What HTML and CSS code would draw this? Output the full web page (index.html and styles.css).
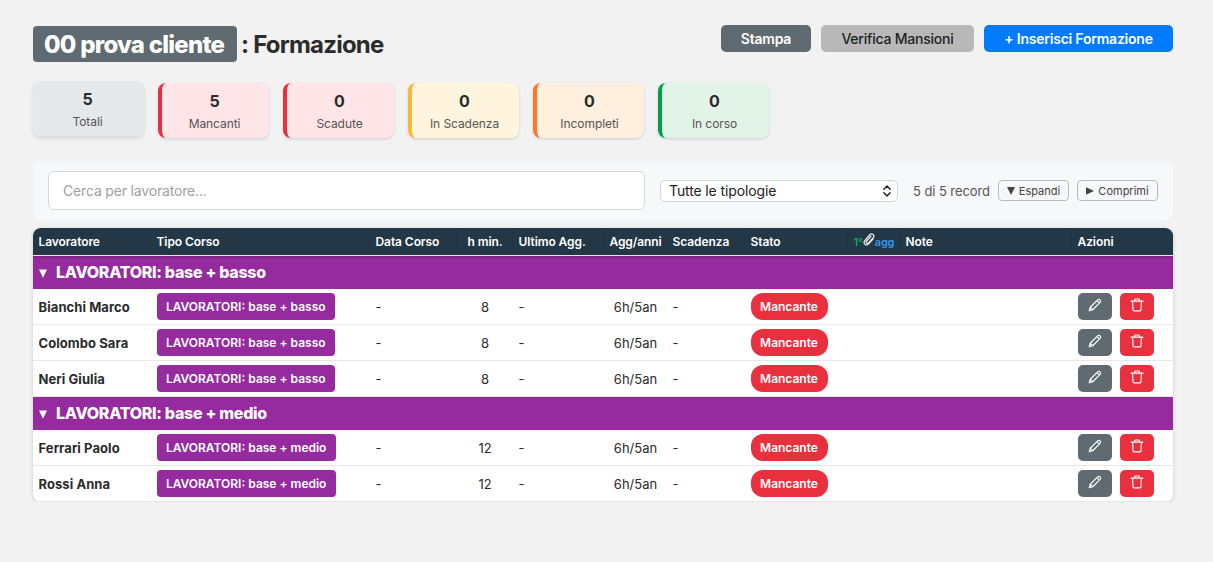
FILE: index.html
```html
<!DOCTYPE html>
<html lang="it">
<head>
    <meta charset="UTF-8">
    <meta name="viewport" content="width=device-width, initial-scale=1.0">
    <title>Formazione</title>
    <link rel="stylesheet" href="styles.css">
</head>
<body>
    <svg class="sprite" width="0" height="0">
        <symbol id="i-edit" viewBox="0 0 16 16">
            <path d="M1.4 14.6 2.6 10.6 11 2.2Q12.4.9 13.8 2.2 15.1 3.6 13.8 5L5.4 13.4ZM10.2 3.1 12.9 5.8M2.7 10.7 5.3 13.3" fill="none" stroke="currentColor" stroke-width="1.3" stroke-linejoin="round"/>
        </symbol>
        <symbol id="i-trash" viewBox="0 0 16 16">
            <path d="M1.3 3.6H14.7M5.3 3.3V2.2Q5.3 1.2 6.3 1.2H9.7Q10.7 1.2 10.7 2.2V3.3M3 3.7 3.4 13.4Q3.5 14.7 4.7 14.7H11.3Q12.5 14.7 12.6 13.4L13 3.7" fill="none" stroke="currentColor" stroke-width="1.3" stroke-linecap="round"/>
        </symbol>
    </svg>

    <div class="page-header">
        <h1><span class="cliente">00 prova cliente</span> <span class="titolo">: Formazione</span></h1>
        <div class="header-actions">
            <button class="btn btn-grey">Stampa</button>
            <button class="btn btn-light">Verifica Mansioni</button>
            <button class="btn btn-blue">+ Inserisci Formazione</button>
        </div>
    </div>

    <div class="stats">
        <div class="stat totali active"><b>5</b><span>Totali</span></div>
        <div class="stat mancanti"><b>5</b><span>Mancanti</span></div>
        <div class="stat scadute"><b>0</b><span>Scadute</span></div>
        <div class="stat in-scadenza"><b>0</b><span>In Scadenza</span></div>
        <div class="stat incompleti"><b>0</b><span>Incompleti</span></div>
        <div class="stat in-corso"><b>0</b><span>In corso</span></div>
    </div>

    <div class="filters">
        <input type="text" class="search" placeholder="Cerca per lavoratore...">
        <div class="select">
            <span>Tutte le tipologie</span>
            <svg width="8" height="12" viewBox="0 0 8 12"><path d="M.9 4.3 4 1.1 7.1 4.3M.9 7.7 4 10.9 7.1 7.7" fill="none" stroke="currentColor" stroke-width="1.5" stroke-linecap="round" stroke-linejoin="round"/></svg>
        </div>
        <span class="count">5 di 5 record</span>
        <button class="btn-small espandi"><svg width="8" height="8" viewBox="0 0 8 8"><path d="M0 0H8L4 8Z" fill="currentColor"/></svg>Espandi</button>
        <button class="btn-small comprimi"><svg width="8" height="8" viewBox="0 0 8 8"><path d="M0 .2V7.8L8 4Z" fill="currentColor"/></svg>Comprimi</button>
    </div>

    <div class="table-wrap">
        <table>
            <colgroup>
                <col class="c-lav"><col class="c-tipo"><col class="c-data"><col class="c-ore"><col class="c-ult"><col class="c-agg">
                <col class="c-scad"><col class="c-stato"><col class="c-att"><col class="c-note"><col class="c-az">
            </colgroup>
            <thead>
                <tr>
                    <th>Lavoratore</th>
                    <th>Tipo Corso</th>
                    <th>Data Corso</th>
                    <th class="center">h min.</th>
                    <th>Ultimo Agg.</th>
                    <th class="center">Agg/anni</th>
                    <th>Scadenza</th>
                    <th>Stato</th>
                    <th class="allegati"><div><span class="primo">1°</span><svg width="12" height="13" viewBox="0 0 12 13"><path d="M10.2 5.8 5.7 10.9Q3.9 12.7 2 11.2 .2 9.6 1.8 7.6L6.8 1.8Q8.4.2 10.1 1.5 11.6 2.9 10.3 4.6L5.7 9.8Q4.6 10.8 3.6 10 2.7 9.1 3.7 8L7.9 3.2" fill="none" stroke="#e4e7ea" stroke-width="1.3" stroke-linecap="round"/></svg><span class="agg">agg</span></div></th>
                    <th>Note</th>
                    <th>Azioni</th>
                </tr>
            </thead>
            <tbody id="corsi"></tbody>
        </table>
    </div>

    <script>
        const gruppi = [
            { tipo: 'LAVORATORI: base + basso', ore: 8, nomi: ['Bianchi Marco', 'Colombo Sara', 'Neri Giulia'] },
            { tipo: 'LAVORATORI: base + medio', ore: 12, nomi: ['Ferrari Paolo', 'Rossi Anna'] }
        ];

        const corsi = document.getElementById('corsi');
        gruppi.forEach(g => {
            let html = `<tr class="gruppo"><td colspan="11"><div><svg width="8" height="9" viewBox="0 0 8 9"><path d="M0 .5H8L4 8.8Z" fill="currentColor"/></svg>${g.tipo}</div></td></tr>`;
            g.nomi.forEach(nome => {
                html += `<tr class="riga">
                    <td class="nome">${nome}</td>
                    <td><span class="tipo">${g.tipo}</span></td>
                    <td>-</td>
                    <td class="center">${g.ore}</td>
                    <td>-</td>
                    <td class="center">6h/5an</td>
                    <td>-</td>
                    <td><span class="stato">Mancante</span></td>
                    <td></td>
                    <td></td>
                    <td><div class="azioni">
                        <button class="icon-btn btn-grey"><svg width="14" height="14"><use href="#i-edit"/></svg></button>
                        <button class="icon-btn btn-red"><svg width="14" height="14"><use href="#i-trash"/></svg></button>
                    </div></td>
                </tr>`;
            });
            corsi.innerHTML += html;
        });
    </script>
</body>
</html>
```
FILE: styles.css
```css
* {
    box-sizing: border-box;
}
body {
    margin: 0;
    padding: 25px 40px 0 33px;
    background-color: #f2f2f2;
    color: #2b2b2b;
    font-family: Inter, "Liberation Sans", sans-serif;
    font-size: 13px;
}
button, input {
    font-family: inherit;
}
.sprite {
    position: absolute;
}

/* intestazione */
.page-header {
    display: flex;
    justify-content: space-between;
    height: 57px;
}
h1 {
    display: flex;
    align-items: center;
    gap: 4px;
    height: 38px;
    margin: 0;
    font-size: 24px;
    font-weight: 700;
    letter-spacing: -0.77px;
    white-space: nowrap;
}
.cliente {
    height: 36px;
    width: 204px;
    padding: 1px 0 0 11px;
    line-height: 36px;
    border-radius: 4px;
    background-color: #5f6b70;
    color: white;
    font-weight: 800;
    letter-spacing: -0.76px;
}
.header-actions {
    display: flex;
    gap: 10px;
}
.btn {
    height: 27px;
    padding: 0;
    border: none;
    border-radius: 5px;
    font-size: 14px;
    font-weight: 600;
    letter-spacing: -0.22px;
    color: white;
    cursor: pointer;
}
.btn-grey {
    width: 90px;
    background-color: #5f6b70;
}
.btn-light {
    width: 153px;
    background-color: #b8b8b8;
    color: #222;
    font-weight: 500;
}
.btn-blue {
    width: 189px;
    background-color: #007aff;
}

/* riquadri */
.stats {
    display: flex;
    gap: 14px;
    margin-bottom: 23px;
    padding-top: 1px;
}
.stat {
    display: flex;
    flex-direction: column;
    align-items: center;
    width: 111px;
    height: 55px;
    padding: 8px 2px 0 0;
    border-left: 4px solid;
    border-radius: 8px;
    box-shadow: 0 1px 3px rgba(0, 0, 0, 0.15);
}
.stat b {
    font-size: 16px;
    line-height: 20px;
}
.stat span {
    margin-top: 5px;
    font-size: 12px;
    line-height: 16px;
    letter-spacing: -0.07px;
    color: #555;
}
.stat.active {
    transform: translateY(-2px);
    border-left: none;
    box-shadow: 0 2px 4px rgba(0, 0, 0, 0.12);
}
.totali { background-color: #e5e9ec; }
.mancanti, .scadute { background-color: #ffe4e8; border-color: #e8303f; }
.in-scadenza { background-color: #fff5de; border-color: #ffb638; }
.incompleti { background-color: #ffefde; border-color: #ff752b; }
.in-corso { background-color: #e2f3e8; border-color: #00a04a; }

/* filtri */
.filters {
    display: flex;
    align-items: center;
    height: 59px;
    margin-bottom: 8px;
    padding: 0 15px;
    border-radius: 8px;
    background-color: #f7f8fa;
}
.search {
    width: 597px;
    height: 39px;
    margin-right: 15px;
    padding: 0 14px;
    border: 1px solid #d8d8d8;
    border-radius: 6px;
    background-color: white;
    font-size: 14px;
    letter-spacing: -0.17px;
}
.search::placeholder {
    color: #a0a0a0;
}
.select {
    display: flex;
    align-items: center;
    justify-content: space-between;
    width: 238px;
    height: 22px;
    margin-right: 15px;
    padding: 0 6px 0 8px;
    border: 1px solid #d4d4d4;
    border-radius: 5px;
    background-color: white;
    font-size: 14px;
    letter-spacing: -0.12px;
    color: #222;
}
.count {
    width: 77px;
    margin-right: 8px;
    white-space: nowrap;
    letter-spacing: -0.08px;
    color: #555;
}
.btn-small {
    display: flex;
    align-items: center;
    justify-content: center;
    gap: 4px;
    width: 71px;
    height: 21px;
    padding: 0;
    border: 1px solid #bbb;
    border-radius: 4px;
    background-color: #f7f8fa;
    font-size: 11px;
    color: #444;
}
.comprimi {
    width: 81px;
    margin-left: 8px;
}

/* tabella */
.table-wrap {
    overflow: hidden;
    border-radius: 8px;
    background-color: white;
    box-shadow: 0 1px 4px rgba(0, 0, 0, 0.16);
}
table {
    width: 100%;
    table-layout: fixed;
    border-collapse: separate;
    border-spacing: 0;
}
.c-lav { width: 118px; }
.c-tipo { width: 219px; }
.c-data { width: 87px; }
.c-ore { width: 56px; }
.c-ult { width: 91px; }
.c-agg { width: 63px; }
.c-scad { width: 78px; }
.c-stato { width: 103px; }
.c-att { width: 52px; }
.c-note { width: 172px; }
.c-az { width: 101px; }
th, td {
    padding: 0 0 0 5.5px;
    text-align: left;
    white-space: nowrap;
}
th {
    height: 28px;
    border-bottom: 1px solid #e6e6e6;
    box-shadow: inset -1px 0 #203442;
    background-color: #233746;
    color: white;
    font-size: 12px;
    font-weight: 600;
    letter-spacing: -0.08px;
}
th.center, td.center {
    padding: 0;
    text-align: center;
}
.allegati div {
    display: flex;
    align-items: center;
    font-size: 11px;
    letter-spacing: -0.2px;
}
.allegati div span {
    margin-top: 1px;
}
.allegati svg {
    margin-top: -4px;
}
.primo { color: #10a765; }
.agg { color: #3598e8; }
.gruppo td {
    height: 33px;
    background-color: #962a9f;
    color: white;
    font-size: 16px;
    font-weight: 800;
    letter-spacing: -0.3px;
}
.gruppo:first-child td {
    box-shadow: inset 0 3px 3px -2px rgba(0, 0, 0, 0.25);
}
.gruppo div {
    display: flex;
    align-items: center;
    gap: 9.5px;
    margin-top: -1px;
}
.gruppo svg {
    margin-top: 3px;
}
.riga td {
    height: 36px;
    border-bottom: 1px solid #e6e6e6;
}
.riga .nome {
    padding-top: 1px;
    font-weight: 700;
    letter-spacing: 0.07px;
}
.tipo, .stato {
    display: block;
    width: max-content;
    height: 27px;
    padding: 0 9.4px;
    line-height: 27px;
    border-radius: 4px;
    background-color: #962a9f;
    color: white;
    font-size: 12px;
    font-weight: 600;
}
.stato {
    width: 77px;
    padding: 0;
    text-align: center;
    border-radius: 12px;
    background-color: #e8303f;
}
.azioni {
    display: flex;
    gap: 8px;
}
.icon-btn {
    width: 34px;
    height: 27px;
    padding: 0 0 3px;
    border: none;
    border-radius: 5px;
    color: white;
    line-height: 0;
}
.btn-red {
    background-color: #e8303f;
}
```
